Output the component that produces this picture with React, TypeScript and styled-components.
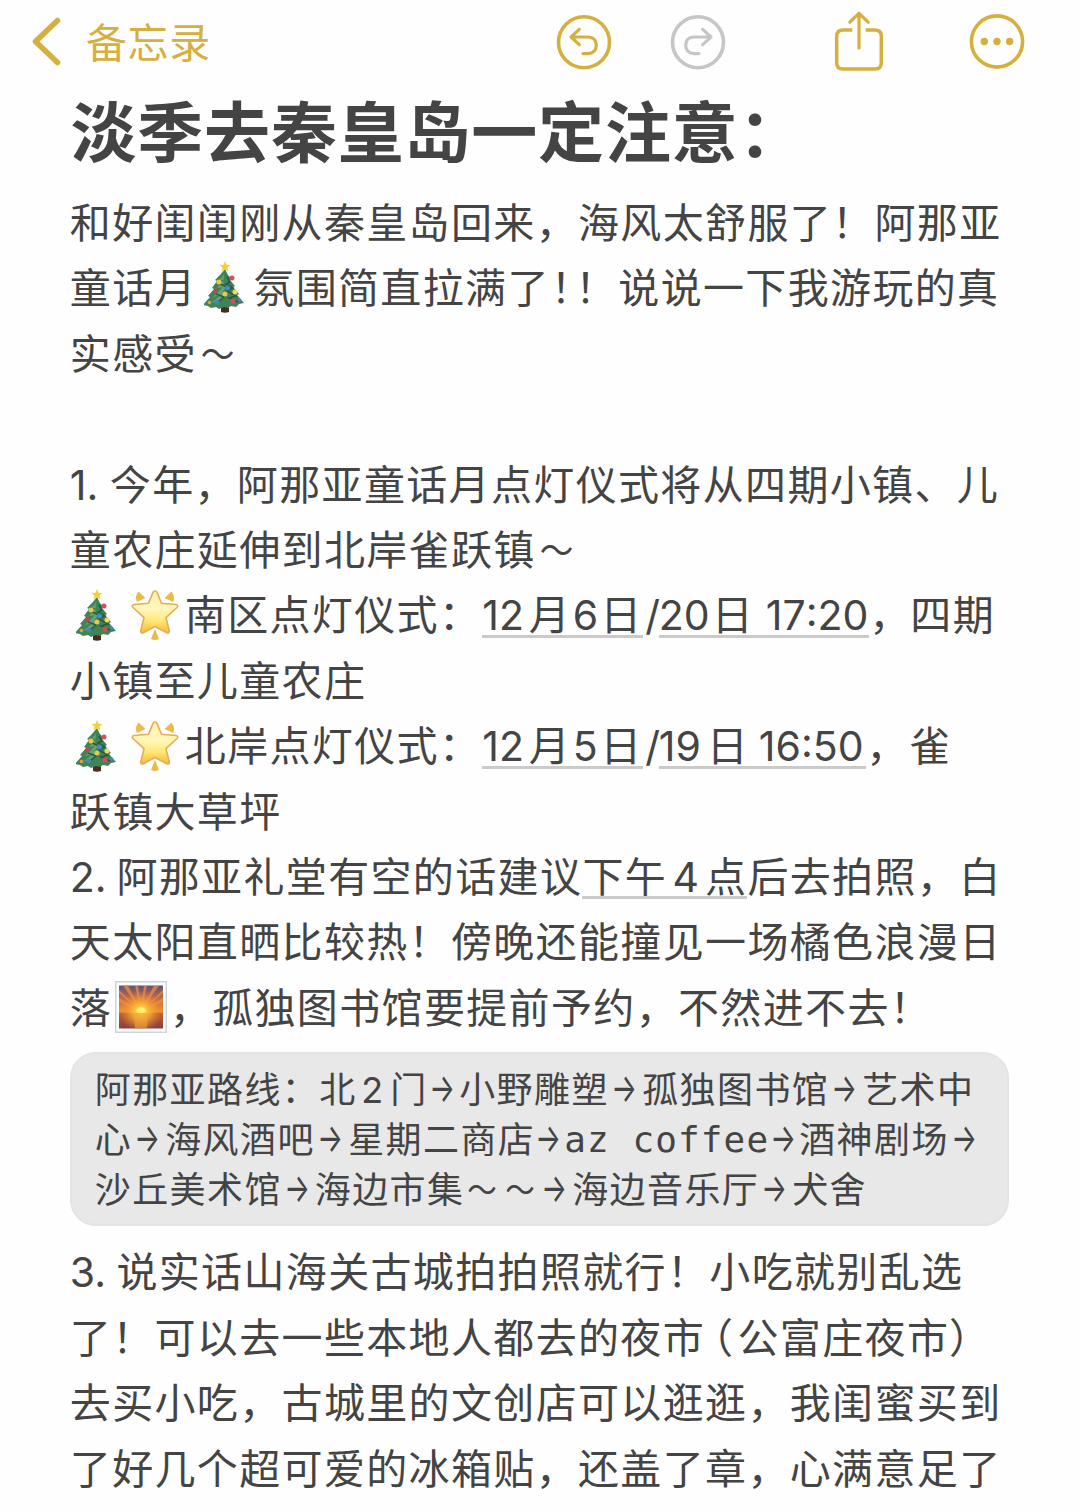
import React from "react";
import styled, { createGlobalStyle, css } from "styled-components";

const GOLD = "#d6b03f";
const INK = "#444444";

const Global = createGlobalStyle`
  *, *::before, *::after { box-sizing: border-box; }
  html, body { margin: 0; padding: 0; background: #fefefe; }
`;

const Page = styled.main`
  width: 1080px;
  height: 1512px;
  overflow: hidden;
  background: #fefefe;
  color: ${INK};
  font-family: Inter, "Noto Sans CJK SC", sans-serif;
`;

const Toolbar = styled.header`
  display: flex;
  align-items: center;
  justify-content: space-between;
  height: 84px;
  padding: 0 55px 0 30px;
`;

const BackButton = styled.a`
  display: flex;
  align-items: center;
  color: ${GOLD};
`;

const BackLabel = styled.span`
  margin-left: 22px;
  padding-top: 1px;
  font-size: 41px;
  line-height: 60px;
  letter-spacing: 0.6px;
`;

const Actions = styled.nav`
  display: flex;
  align-items: center;
`;

const IconButton = styled.button<{ $gap?: number }>`
  display: flex;
  padding: 0;
  border: 0;
  background: none;
  margin-left: ${(p) => p.$gap ?? 0}px;
`;

const Title = styled.h1`
  margin: 0 0 11.500px 70.500px;
  padding-top: 1.500px;
  font-size: 66px;
  line-height: 94px;
  font-weight: 700;
  letter-spacing: 0.8px;
  white-space: nowrap;
`;

const Note = styled.section`
  padding-left: 69.800px;
`;

const Line = styled.div`
  display: flex;
  height: 65.4px;
  line-height: 65.4px;
  font-size: 41px;
  letter-spacing: 1.35px;
  white-space: pre;
`;

const Run = styled.span<{
  $w?: number;
  $sp?: number;
  $pad?: number;
  $date?: boolean;
  $mono?: boolean;
  $half?: boolean;
}>`
  flex: none;
  padding-left: ${(p) => p.$pad ?? 0}px;
  ${(p) => p.$w !== undefined && css`width: ${p.$w}px;`}
  ${(p) => p.$sp !== undefined && css`letter-spacing: ${p.$sp}px;`}
  ${(p) => p.$mono && css`font-family: "DejaVu Sans Mono", monospace;`}
  ${(p) => p.$half && css`font-feature-settings: "halt" 1;`}
  ${(p) => p.$date && css`
    background: linear-gradient(#cacaca, #cacaca) 0 51.500px / 100% 3px no-repeat;
  `}
`;

const Colon = styled.span`
  vertical-align: 4px;
  line-height: 1;
`;

const Tilde = styled.span`
  display: inline-block;
  transform: scale(0.82, 0.9);
`;

const ArrowSlot = styled.span<{ $w: number }>`
  flex: none;
  display: flex;
  justify-content: center;
  width: ${(p) => p.$w}px;
  letter-spacing: 0;
`;

const ArrowGlyph = styled.span`
  font-size: 30px;
  transform: translate(-1.200px, -2.500px) scale(0.9, 1.34);
`;

const EmojiSlot = styled.span<{ $w: number; $pad?: number; $top?: number }>`
  flex: none;
  display: flex;
  align-items: flex-start;
  width: ${(p) => p.$w}px;
  padding-left: ${(p) => p.$pad ?? 0}px;
  padding-top: ${(p) => p.$top ?? 0}px;
`;

const CodeBlock = styled.div`
  width: 939.500px;
  height: 174px;
  margin: 10.8px 0 14.5px 0;
  padding: 11px 0 0 23px;
  border: 2px solid #e4e4e4;
  border-radius: 26px;
  background: #e8e8e8;
`;

const CodeLine = styled(Line)`
  height: 50.3px;
  line-height: 50.3px;
  font-size: 36px;
  letter-spacing: 1.4px;
`;

function Tree() {
  return (
    <svg width="42" height="52" viewBox="0 0 42 52">
      <path d="M17 42h8v9q-4 1.5-8 0z" fill="#4b2c1c" />
      <path d="M21 8l3 6 4 4-2 1 5 6-2 1 6 7-2 1 7 8-5 1-3 3-5-1-3 2-4-1-5 2-3-2-5 1-3-2-5-1 7-8-2-1 6-7-2-1 5-7-2-1 5-5z" fill="#3f8358" />
      <path d="M20 13l-4 6 4 0-7 8 6-1-10 10 8-2-10 8 12-4 3-8-4 2 5-8-4 1z" fill="#67a375" />
      <path d="M23 16l3 5-4 2 7 4-6 3 9 5-7 2 9 4M12 33l8 3-5 4M16 23l7 3" fill="none" stroke="#265c40" strokeWidth="1.6" />
      <path d="M21 0l1.5 3.8 4 .2-3.100 2.600 1.100 4L21 8.400l-3.500 2.200 1.100-4L15.500 4l4-.2z" fill="#f3cf3a" />
      <circle cx="28" cy="17" r="2.500" fill="#d9505c" />
      <circle cx="15" cy="21" r="2.500" fill="#ecc84c" />
      <circle cx="23.500" cy="27" r="2.500" fill="#4a86c9" />
      <circle cx="31" cy="31" r="2.500" fill="#efd766" />
      <circle cx="12" cy="30" r="2.200" fill="#c9444e" />
      <circle cx="21" cy="33" r="2.500" fill="#edc747" />
      <circle cx="29" cy="40" r="2.600" fill="#d84b59" />
      <circle cx="13" cy="41" r="2.300" fill="#4a80c4" />
      <circle cx="35.500" cy="39" r="1.800" fill="#4a80c4" />
      <circle cx="5.500" cy="41.500" r="1.800" fill="#dda03e" />
    </svg>
  );
}

function Star() {
  return (
    <svg width="48" height="52" viewBox="0 0 48 52">
      <defs>
        <linearGradient id="glow" x1="0" y1="0" x2="0" y2="1">
          <stop offset="0" stopColor="#fff2b0" />
          <stop offset="0.45" stopColor="#fff6b8" />
          <stop offset="0.7" stopColor="#ffe878" />
          <stop offset="1" stopColor="#f5bb30" />
        </linearGradient>
      </defs>
      <path d="M7.500 2.500l7 6.500-8.600 4Q3.500 7.500 7.500 2.500zM40.500 2.500l-7 6.500 8.600 4Q44.500 7.500 40.500 2.500zM24 40l4 10q-4 2-8 0z" fill="#ecbb45" />
      <path d="M24 2q1.400 0 2.200 1.900l4.300 10.300 14.500 1.300q2.900.8 1 3L35 28.700l3.300 13.300q0 2.800-2.500 1.800L24 37.500 12.200 43.800q-2.500 1-2.500-1.800L13 28.700 2 18.500q-1.900-2.200 1-3l14.500-1.300L21.800 3.900Q22.600 2 24 2z" fill="url(#glow)" stroke="#e3ad5c" strokeWidth="1.600" strokeLinejoin="round" />
    </svg>
  );
}

function Sunrise() {
  return (
    <svg width="52" height="52" viewBox="0 0 52 52">
      <defs>
        <linearGradient id="dusk" x1="0" y1="0" x2="0" y2="1">
          <stop offset="0" stopColor="#5d5377" />
          <stop offset="0.3" stopColor="#c06b4c" />
          <stop offset="0.62" stopColor="#f0912d" />
          <stop offset="0.64" stopColor="#c25f30" />
          <stop offset="1" stopColor="#853f42" />
        </linearGradient>
        <radialGradient id="sun" cx="50%" cy="60%" r="48%">
          <stop offset="0" stopColor="#fff27a" />
          <stop offset="0.35" stopColor="#fdbb32" stopOpacity="0.9" />
          <stop offset="1" stopColor="#f08a30" stopOpacity="0" />
        </radialGradient>
      </defs>
      <rect x="0.750" y="0.750" width="50.500" height="50.500" fill="#fff" stroke="#cdd3da" strokeWidth="1.500" />
      <rect x="4" y="4.500" width="44" height="43" fill="url(#dusk)" />
      <path d="M26 30L4 21v-4zM26 30L8 4.500h5zM26 30L20 4.500h3zM26 30L29 4.500h3zM26 30L39 4.500h5zM26 30l22-13v4zM26 30L4 9v3zM26 30L48 9v3z" fill="#f58a3a" opacity="0.750" />
      <rect x="4" y="4.500" width="44" height="43" fill="url(#sun)" />
      <path d="M19 32h14l-1 15.500H20z" fill="#f3a03a" opacity="0.600" />
      <path d="M21 31a5 5 0 0 1 10 0q-5 2-10 0z" fill="#fff06a" />
    </svg>
  );
}

const BackIcon = () => (
  <svg width="34" height="52" viewBox="30 16 34 52">
    <path d="M57.500 20.500L35.500 41.500L57.500 62.500" fill="none" stroke={GOLD} strokeWidth="5.600" strokeLinecap="round" strokeLinejoin="round" />
  </svg>
);

const UndoIcon = ({ color, flip }: { color: string; flip?: boolean }) => (
  <svg width="56" height="56" viewBox="0 0 56 56">
    <g transform={flip ? "translate(56 0) scale(-1 1)" : undefined} fill="none" stroke={color} strokeLinecap="round" strokeLinejoin="round">
      <circle cx="28" cy="28.300" r="25.500" strokeWidth="3.600" />
      <path d="M23.300 15.300L15 23L23.300 30.700M15.500 23H32Q40.300 23.500 40.300 31.200Q40.300 39 32 39.600H27" strokeWidth="3.200" />
    </g>
  </svg>
);

const ShareIcon = () => (
  <svg width="50" height="62" viewBox="834 10.500 50 62">
    <g fill="none" stroke={GOLD} strokeWidth="3.500" strokeLinejoin="round">
      <path d="M852.300 29.400H843Q836.700 29.400 836.700 35.700V62.200Q836.700 68.500 843 68.500H875Q881.300 68.500 881.300 62.200V35.700Q881.300 29.400 875 29.400H865.700" />
      <path d="M859 47.500V13M849.800 21.700L859 12.800L868.200 21.700" strokeLinecap="round" strokeWidth="3.200" />
    </g>
  </svg>
);

const MoreIcon = () => (
  <svg width="56" height="56" viewBox="0 0 56 56">
    <circle cx="28" cy="27.500" r="25.600" fill="none" stroke={GOLD} strokeWidth="3.600" />
    <g fill={GOLD}>
      <circle cx="15.300" cy="27.500" r="3.700" />
      <circle cx="28" cy="27.500" r="3.700" />
      <circle cx="40.600" cy="27.500" r="3.700" />
    </g>
  </svg>
);

const Arrow = ({ w = 33 }: { w?: number }) => (
  <ArrowSlot $w={w}>
    <ArrowGlyph>→</ArrowGlyph>
  </ArrowSlot>
);

function CeremonyLead({ place }: { place: string }) {
  return (
    <>
      <EmojiSlot $w={61} $pad={6} $top={6}><Tree /></EmojiSlot>
      <EmojiSlot $w={54} $pad={0.500} $top={6}><Star /></EmojiSlot>
      <Run $w={297.500}>{place}点灯仪式：</Run>
    </>
  );
}

export default function App() {
  return (
    <Page>
      <Global />
      <Toolbar>
        <BackButton>
          <BackIcon />
          <BackLabel>备忘录</BackLabel>
        </BackButton>
        <Actions>
          <IconButton><UndoIcon color={GOLD} /></IconButton>
          <IconButton $gap={58.500}><UndoIcon color="#c6c6c6" flip /></IconButton>
          <IconButton $gap={107.500}><ShareIcon /></IconButton>
          <IconButton $gap={85.500}><MoreIcon /></IconButton>
        </Actions>
      </Toolbar>
      <Title>淡季去秦皇岛一定注意：</Title>
      <Note>
        <Line>和好闺闺刚从秦皇岛回来，海风太舒服了！阿那亚</Line>
        <Line>
          <Run $w={134}>童话月</Run>
          <EmojiSlot $w={49.500} $top={5}><Tree /></EmojiSlot>
          <Run $w={297.500}>氛围简直拉满了</Run>
          <Run $w={67.500} $sp={-16.500}>！！</Run>
          <Run>说说一下我游玩的真</Run>
        </Line>
        <Line>实感受<Tilde>～</Tilde></Line>
        <Line />
        <Line>
          <Run $w={40} $sp={0}>1.</Run>
          <Run>今年，阿那亚童话月点灯仪式将从四期小镇、儿</Run>
        </Line>
        <Line>童农庄延伸到北岸雀跃镇<Tilde>～</Tilde></Line>
        <Line>
          <CeremonyLead place="南区" />
          <Run $date $w={46.500} $sp={0}>12</Run>
          <Run $date $w={44} $sp={0}>月</Run>
          <Run $date $w={26.500} $sp={0}>6</Run>
          <Run $date $w={44} $pad={1} $sp={0}>日</Run>
          <Run $w={15.500} $pad={2}>/</Run>
          <Run $date $w={53} $sp={0}>20</Run>
          <Run $date $w={54}>日</Run>
          <Run $date $w={103.500} $sp={0}>17<Colon>:</Colon>20</Run>
          <Run $w={41} $sp={0}>，</Run>
          <Run>四期</Run>
        </Line>
        <Line>小镇至儿童农庄</Line>
        <Line>
          <CeremonyLead place="北岸" />
          <Run $date $w={46.500} $sp={0}>12</Run>
          <Run $date $w={44} $sp={0}>月</Run>
          <Run $date $w={26.500} $sp={0}>5</Run>
          <Run $date $w={44} $pad={1} $sp={0}>日</Run>
          <Run $w={15.500} $pad={2}>/</Run>
          <Run $date $w={48} $sp={0}>19</Run>
          <Run $date $w={52}>日</Run>
          <Run $date $w={107.500} $sp={0}>16<Colon>:</Colon>50</Run>
          <Run $w={43}>，</Run>
          <Run>雀</Run>
        </Line>
        <Line>跃镇大草坪</Line>
        <Line>
          <Run $w={46.600} $sp={0}>2.</Run>
          <Run $w={466}>阿那亚礼堂有空的话建议</Run>
          <Run $date $w={90}>下午</Run>
          <Run $date $w={32.500}>4</Run>
          <Run $date $w={42.500}>点</Run>
          <Run>后去拍照，白</Run>
        </Line>
        <Line>天太阳直晒比较热！傍晚还能撞见一场橘色浪漫日</Line>
        <Line>
          <Run $w={45}>落</Run>
          <EmojiSlot $w={55} $top={5}><Sunrise /></EmojiSlot>
          <Run>，孤独图书馆要提前予约，不然进不去！</Run>
        </Line>
        <CodeBlock>
          <CodeLine>
            <Run $w={266.500}>阿那亚路线：北</Run>
            <Run $w={29}>2</Run>
            <Run $w={37.400}>门</Run>
            <Arrow w={31.500} />
            <Run $w={150}>小野雕塑</Run>
            <Arrow />
            <Run $w={187}>孤独图书馆</Run>
            <Arrow />
            <Run>艺术中</Run>
          </CodeLine>
          <CodeLine>
            <Run $w={37.400}>心</Run>
            <Arrow />
            <Run $w={150}>海风酒吧</Run>
            <Arrow />
            <Run $w={187}>星期二商店</Run>
            <Arrow w={29} />
            <Run $mono $w={206} $sp={1.100}>az coffee</Run>
            <Arrow w={29} />
            <Run $w={150}>酒神剧场</Run>
            <Arrow />
          </CodeLine>
          <CodeLine>
            <Run $w={187}>沙丘美术馆</Run>
            <Arrow />
            <Run $w={224.400}>海边市集<Tilde>～</Tilde><Tilde>～</Tilde></Run>
            <Arrow />
            <Run $w={187}>海边音乐厅</Run>
            <Arrow />
            <Run>犬舍</Run>
          </CodeLine>
        </CodeBlock>
        <Line>
          <Run $w={46.600} $sp={0}>3.</Run>
          <Run>说实话山海关古城拍拍照就行！小吃就别乱选</Run>
        </Line>
        <Line>
          <Run $w={84.700}>了！</Run>
          <Run $w={551}>可以去一些本地人都去的夜市</Run>
          <Run $half $w={32} $pad={7} $sp={0}>（</Run>
          <Run $w={211.500}>公富庄夜市</Run>
          <Run $half $sp={0}>）</Run>
        </Line>
        <Line>去买小吃，古城里的文创店可以逛逛，我闺蜜买到</Line>
        <Line>了好几个超可爱的冰箱贴，还盖了章，心满意足了</Line>
      </Note>
    </Page>
  );
}
